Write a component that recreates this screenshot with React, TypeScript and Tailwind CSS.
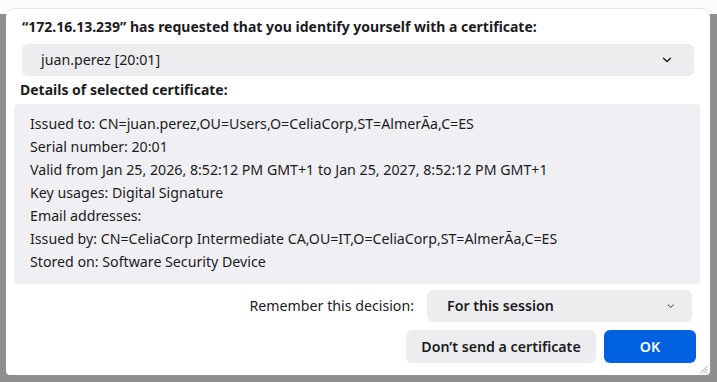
import React from "react";

const lines = [
  "Issued to: CN=juan.perez,OU=Users,O=CeliaCorp,ST=AlmerÃa,C=ES",
  "Serial number: 20:01",
  "Valid from Jan 25, 2026, 8:52:12 PM GMT+1 to Jan 25, 2027, 8:52:12 PM GMT+1",
  "Key usages: Digital Signature",
  "Email addresses:",
  "Issued by: CN=CeliaCorp Intermediate CA,OU=IT,O=CeliaCorp,ST=AlmerÃa,C=ES",
  "Stored on: Software Security Device",
];

function Chevron({ small }: { small?: boolean }) {
  const s = small ? 0.75 : 1;
  return (
    <svg width={10 * s} height={6 * s} viewBox="0 0 10 6" className="shrink-0">
      <path d="M1.5 1.2 L5 4.6 L8.5 1.2" fill="none" stroke="#1c1b22" strokeWidth={small ? 1.2 : 1.4} strokeLinecap="round" strokeLinejoin="round" />
    </svg>
  );
}

export default function App() {
  return (
    <div
      className="w-[717px] h-[382px] overflow-hidden bg-[linear-gradient(to_bottom,#fbfbfb_14px,#8f8f91_14px)] pt-2 pl-[6px] pr-[7px] pb-[7px] text-[#1c1b22] text-[14.2px]"
      style={{ fontFamily: '"Noto Sans", "Open Sans", sans-serif' }}
    >
      <div className="relative h-full bg-white rounded-t-[9px] rounded-b-[4px] border-t border-[#e4e4e7] flex flex-col">
        <div className="pl-4 pt-2 font-bold text-[14px] leading-[20px]">
          “172.16.13.239” has requested that you identify yourself with a certificate:
        </div>
        <div className="mx-4 mt-[7px] h-8 shrink-0 rounded-[6px] bg-[#ededf0] flex items-center pl-[19px] pr-[22px] justify-between">
          <span>juan.perez [20:01]</span>
          <Chevron />
        </div>
        <div className="pl-[14px] mt-1 font-bold text-[14px] leading-[20px]">Details of selected certificate:</div>
        <div className="ml-2 mr-[10px] mt-1 h-[180px] shrink-0 rounded-[4px] bg-[#f0f0f4] pl-4 pt-2 flex flex-col">
          {lines.map((l) => (
            <div key={l} className="h-[23px] leading-[23px] whitespace-nowrap">{l}</div>
          ))}
        </div>
        <div className="mt-[6px] flex items-center justify-end pr-[18px] gap-[13px]">
          <span>Remember this decision:</span>
          <div className="w-[265px] h-8 rounded-[6px] bg-[#ededf0] flex items-center justify-between pl-5 pr-[18px] font-semibold">
            <span>For this session</span>
            <Chevron small />
          </div>
        </div>
        <div className="mt-2 flex justify-end pr-[14px] gap-2">
          <button className="w-[190px] h-[33px] rounded-[6px] bg-[#ededf0] font-semibold">Don’t send a certificate</button>
          <button className="w-[92px] h-[33px] rounded-[6px] bg-[#0061e0] text-white font-semibold">OK</button>
        </div>
        <svg width="9" height="9" viewBox="0 0 9 9" className="absolute right-[2px] bottom-[1px]">
          <path d="M8.5 1 L1 8.5 M8.5 4 L4 8.5 M8.5 7 L7 8.5" stroke="#9a9a9a" strokeWidth="0.9" />
        </svg>
      </div>
    </div>
  );
}
